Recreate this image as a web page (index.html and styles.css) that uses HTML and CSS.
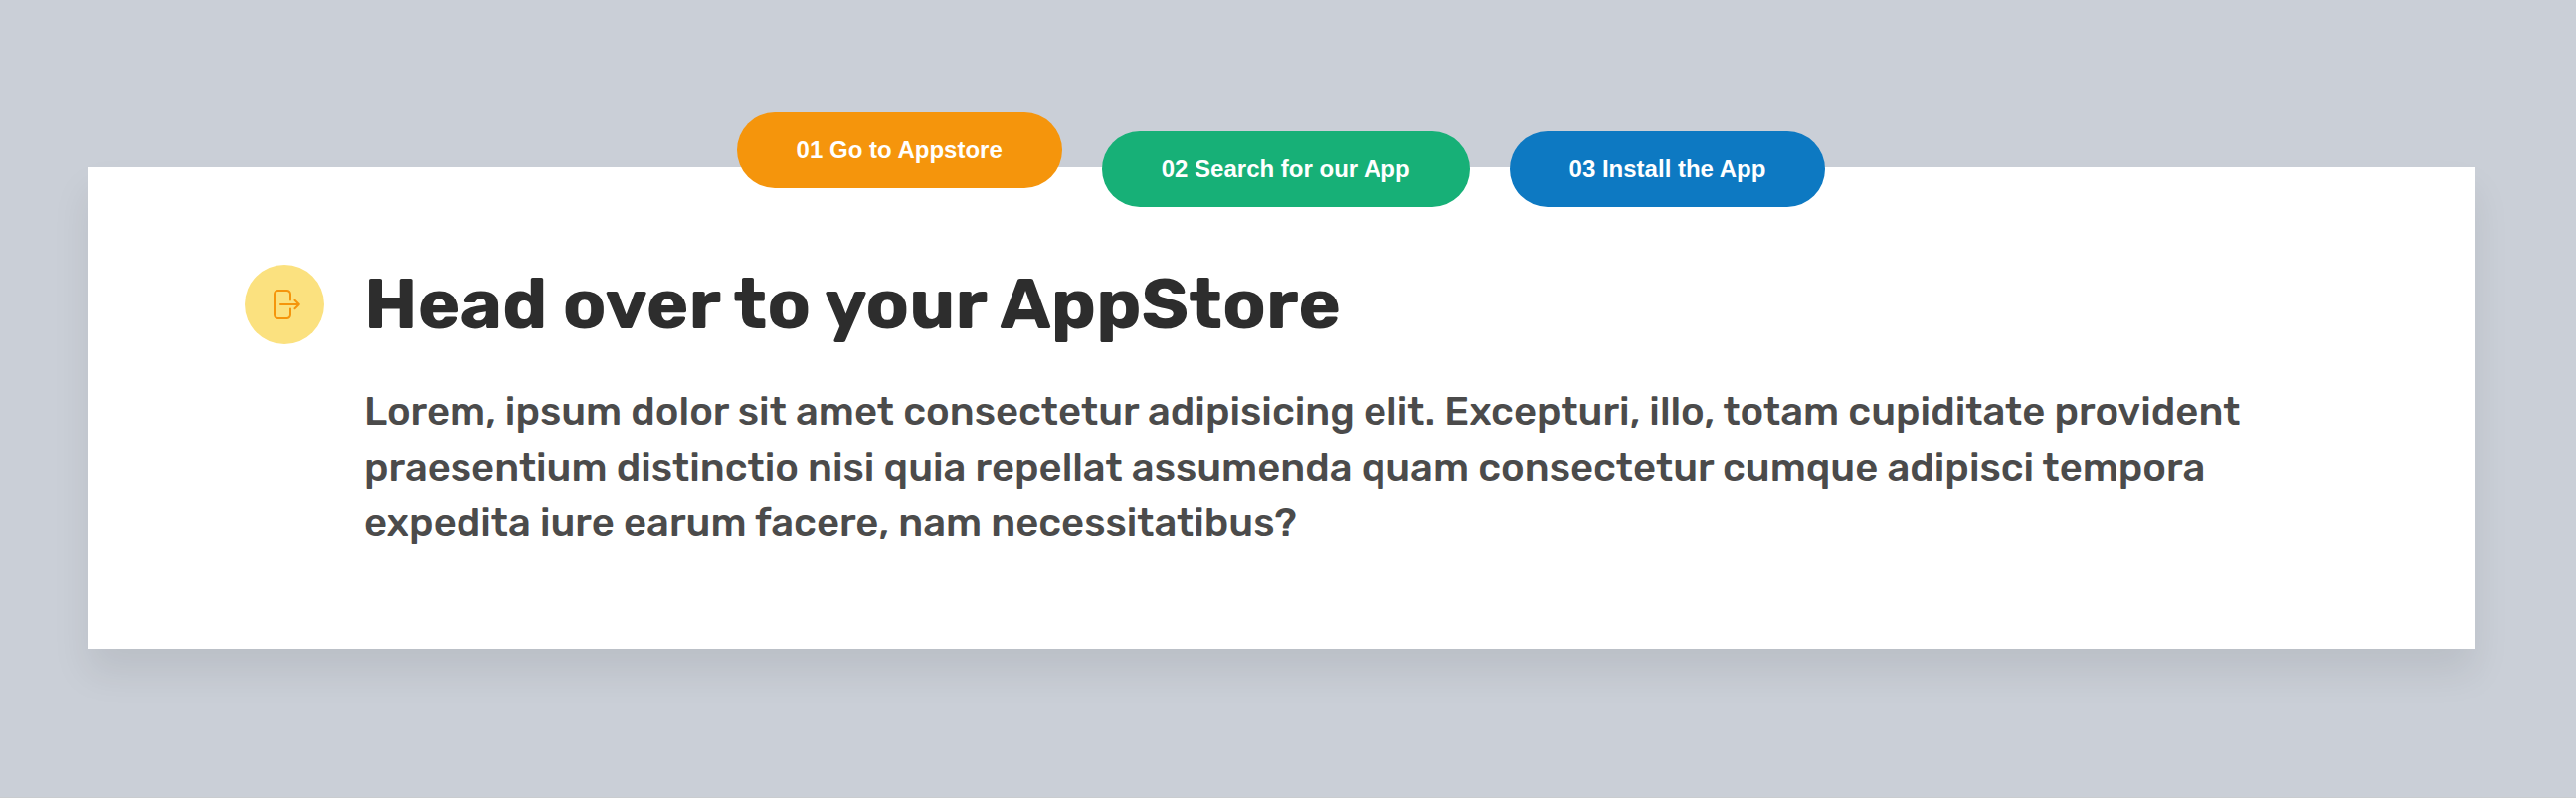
FILE: index.html
```html
<!DOCTYPE html>
<html lang="en">
<head>
<meta charset="utf-8">
<title>Operations</title>
<link rel="stylesheet" href="styles.css">
</head>
<body>
<section class="operations">
  <div class="tabs">
    <button class="tab tab-active tab-orange">01 Go to Appstore</button>
    <button class="tab tab-green">02 Search for our App</button>
    <button class="tab tab-blue">03 Install the App</button>
  </div>
  <div class="content">
    <div class="icon">
      <svg viewBox="0 0 32 32" fill="none" stroke="#f5950c" stroke-width="2" stroke-linecap="round" stroke-linejoin="round"><path d="M22 11.600V5.500A3.500 3.500 0 0 0 18.500 2h-9A3.500 3.500 0 0 0 6 5.500v21A3.500 3.500 0 0 0 9.500 30h9a3.500 3.500 0 0 0 3.500-3.500v-6.100M12 16h18.800M26.500 11.700l4.300 4.300-4.300 4.300"/></svg>
    </div>
    <h5 class="heading">Head over to your AppStore</h5>
    <p class="text">Lorem, ipsum dolor sit amet consectetur adipisicing elit. Excepturi, illo, totam cupiditate provident praesentium distinctio nisi quia repellat assumenda quam consectetur cumque adipisci tempora expedita iure earum facere, nam necessitatibus?</p>
  </div>
</section>
</body>
</html>
```
FILE: styles.css
```css
* { box-sizing: border-box; margin: 0; padding: 0; }
body { background: #cacfd7; font-family: Rubik, Roboto, sans-serif; height: 802px; overflow: hidden; display: flow-root; border-bottom: 1px solid #c9cccf; }
.operations { width: 2400px; height: 484px; margin: 168px 0 0 88px; background: #fff; box-shadow: 0 24px 36px rgba(0, 0, 0, 0.08); display: flow-root; }
.tabs { display: flex; justify-content: center; gap: 40px; margin-top: -36px; }
.tab { height: 76px; padding: 0 60px; border: 0; border-radius: 38px; color: #fff; font: bold 24px "Liberation Sans", Arial, sans-serif; white-space: nowrap; }
.tab-active { transform: translateY(-19px); }
.tab-orange { background: #f5950c; }
.tab-green { background: #17b077; }
.tab-blue { background: #0d79c2; }
.content { display: grid; grid-template-columns: 80px 1fr; column-gap: 40px; row-gap: 39.5px; padding: 58px 158px 0; }
.icon { width: 80px; height: 80px; border-radius: 50%; background: #fbe17f; display: flex; align-items: center; justify-content: center; }
.icon svg { width: 32px; height: 32px; }
.heading { font-size: 72px; font-weight: 700; line-height: 79px; color: #2d2d2d; white-space: nowrap; }
.text { grid-column: 2; font-size: 40px; font-weight: 500; line-height: 56px; color: #4b4b4b; }
```
